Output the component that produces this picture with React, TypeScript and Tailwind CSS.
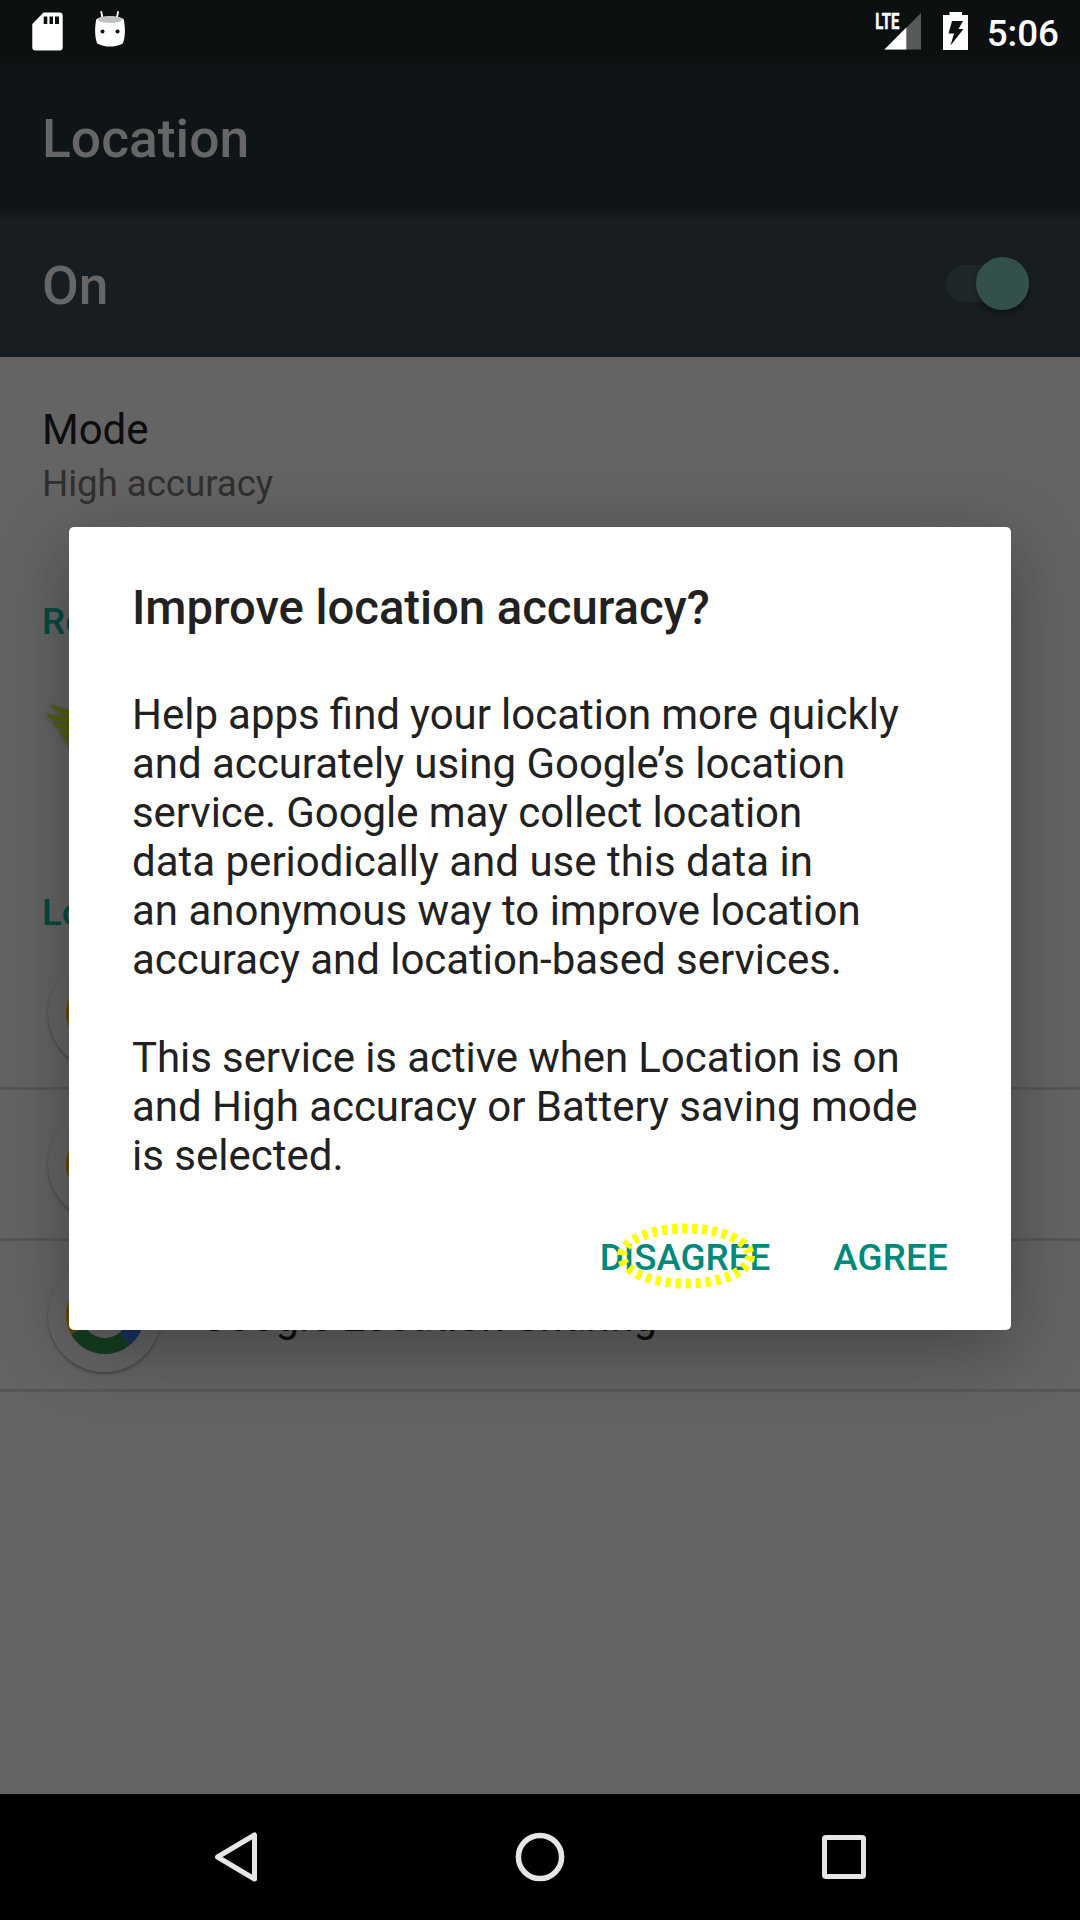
import React from "react";

function StatusBar() {
  return (
    <header className="flex h-[63px] shrink-0 items-start justify-between bg-[#0c1011] text-white">
      <div className="flex">
        <svg className="ml-8 mt-3 h-[39px] w-[31px]" viewBox="0 0 31 39">
          <path
            fill="#fff"
            fillRule="evenodd"
            d="M11.5.5H27.5Q30.7.5 30.7 3.7V35.3Q30.7 38.5 27.500 38.500H3.500Q.3 38.500.3 35.300V12ZM11.700 4.500V12H15.300V4.500ZM17.500 4.500V12H21V4.500ZM23 4.500V12H27V4.500Z"
          />
        </svg>
        <svg className="ml-[31px] mt-2.5 h-[38px] w-[32px]" viewBox="0 0 32 38">
          <path d="M7.300 2 8.700 9M24 2 22.700 9" stroke="#fff" strokeWidth="1.800" strokeLinecap="round" />
          <path
            fill="#fff"
            d="M2.200 9.500C6 5 26 5 29.800 9.500C31.400 18 31.400 27 28.800 33.500C22 37.600 10 37.600 3.200 33.500C.6 27 .6 18 2.200 9.500Z"
          />
          <ellipse cx="16" cy="9.700" rx="12" ry="3.400" fill="#bfc1c1" />
          <circle cx="8.500" cy="21.500" r="2" fill="#0c1011" />
          <circle cx="23.500" cy="21.500" r="2" fill="#0c1011" />
        </svg>
      </div>
      <div className="flex">
        <svg className="mt-3 h-[39px] w-[47px] overflow-visible" viewBox="0 0 47 39">
          <path d="M46 1V37.500H9.500Z" fill="#57595a" />
          <path d="M31.300 15.500V37.500H9.500Z" fill="#fff" />
          <text
            x="0.300"
            y="17.300"
            fill="#fff"
            stroke="#fff"
            strokeWidth="0.500"
            className="font-['Roboto'] text-[22px] font-bold"
            textLength="24"
            lengthAdjust="spacingAndGlyphs"
          >
            LTE
          </text>
        </svg>
        <svg className="ml-[21px] mt-3 h-[38px] w-[25px]" viewBox="0 0 25 38">
          <path d="M6.500 0H19V3H25V38H0V3H6.500Z" fill="#fff" />
          <path d="M9 9H20L15.500 17H20.500L7.500 33.500L11 21.500H5.500Z" fill="#0c1011" />
        </svg>
        <span className="ml-[19px] mr-[21px] mt-[12px] text-[36.75px] font-medium leading-[44px]">5:06</span>
      </div>
    </header>
  );
}

function GoogleBadge() {
  return (
    <div className="flex size-[113px] items-center justify-center rounded-full bg-[#656565] shadow-[0_2px_3px_rgba(0,0,0,0.3)]">
      <svg className="size-[78px]" viewBox="-39 -39 78 78" fill="none" strokeWidth="16">
        <path d="M-21.900 -21.900A31 31 0 0 1 21.900 -21.900" stroke="#5e1b15" />
        <path d="M-26.800 15.500A31 31 0 0 1 -21.900 -21.900" stroke="#644a02" />
        <path d="M20 23.700A31 31 0 0 1 -26.800 15.500" stroke="#153f20" />
        <path d="M31 0A31 31 0 0 1 20 23.700" stroke="#1a3161" />
      </svg>
    </div>
  );
}

function ServiceRow({ label }: { label: string }) {
  return (
    <li className="flex h-[151px] items-center gap-[38px] border-b-[3px] border-[#575757] pl-[48px]">
      <GoogleBadge />
      <span className="pt-[3px] text-[42px] leading-[49px] text-[#0d0d0d]">{label}</span>
    </li>
  );
}

function WingIcon() {
  return (
    <svg
      className="ml-[45px] mt-[61px] h-[84px] w-[96px] drop-shadow-[0_1px_2px_rgba(0,0,0,0.3)]"
      viewBox="0 0 96 84"
      fill="#506200"
    >
      <path d="M5 0Q14 4 40 10V19L24 13Q9 7 5 0Z" />
      <path d="M0 9Q12 13 40 15V27L24 20Q6 17 0 9Z" />
      <path d="M7 18Q16 21 40 22V34L24 28Q12 25 7 18Z" />
      <path d="M13 27Q20 29 40 29V40L24 33Q16 32 13 27Z" />
      <path d="M17 34Q22 35 40 34V45L24 38Q19 37 17 34Z" />
      <path d="M21 40Q26 41 40 41V48L24 43Z" />
    </svg>
  );
}

function SettingsPage() {
  return (
    <>
      <div className="flex h-[147px] shrink-0 items-center bg-[#0f1517] pl-[42px] pt-[5px]">
        <h1 className="text-[53.4px] font-medium leading-[62px] text-[#666]">Location</h1>
      </div>
      <div className="flex h-[147px] shrink-0 items-center justify-between bg-[#171d20] bg-linear-to-b from-[#11171a] from-0% to-[#171d20] to-7% pl-[42px] pr-[51px]">
        <span className="pt-1 text-[53.4px] font-medium leading-[62px] text-[#666]">On</span>
        <div className="flex h-[37px] w-[83px] items-center justify-end rounded-full bg-[#1e2829]">
          <div className="size-[53px] shrink-0 rounded-full bg-[#34504c] shadow-[0_4px_5px_rgba(0,0,0,0.3)]" />
        </div>
      </div>
      <main className="flex flex-1 flex-col bg-[#646464]">
        <div className="pl-[42px] pt-12">
          <p className="text-[42px] leading-[49px] text-[#0d0d0d]">Mode</p>
          <p className="mt-2 text-[36.75px] leading-[43px] tracking-[-0.08px] text-[#303030]">High accuracy</p>
        </div>
        <h2 className="mt-[95px] pl-[42px] text-[36.75px] font-medium leading-[43px] text-[#004c43]">
          Recent location requests
        </h2>
        <WingIcon />
        <h2 className="mt-[103px] pl-[42px] text-[36.75px] font-medium leading-[43px] text-[#004c43]">
          Location services
        </h2>
        <ul className="mt-[5px]">
          <ServiceRow label="Emergency Location Service" />
          <ServiceRow label="Google Location History" />
          <ServiceRow label="Google Location Sharing" />
        </ul>
      </main>
    </>
  );
}

function AccuracyDialog() {
  return (
    <div className="absolute inset-x-0 top-[527px] flex justify-center">
      <section className="flex h-[803px] w-[942px] flex-col rounded-[5px] bg-white px-[63px] pt-[53px] text-[#212121] shadow-[0_18px_74px_rgba(0,0,0,0.33)]">
        <h2 className="text-[47.25px] font-medium leading-[56px] tracking-[-0.04px]">Improve location accuracy?</h2>
        <div className="mt-[54px] flex flex-col gap-[49px] whitespace-nowrap text-[42px] leading-[49px]">
          <p>
            <span className="block [word-spacing:-0.35px]">Help apps find your location more quickly</span>
            <span className="block tracking-[-0.035px]">and accurately using Google’s location</span>
            <span className="block tracking-[-0.065px]">service. Google may collect location</span>
            <span className="block">data periodically and use this data in</span>
            <span className="block">an anonymous way to improve location</span>
            <span className="block tracking-[-0.03px]">accuracy and location-based services.</span>
          </p>
          <p>
            <span className="block tracking-[-0.085px]">This service is active when Location is on</span>
            <span className="block tracking-[-0.035px]">and High accuracy or Battery saving mode</span>
            <span className="block">is selected.</span>
          </p>
        </div>
        <div className="mt-[56px] flex justify-end gap-[63px] text-[36.75px] font-medium leading-[43px] text-[#00897b]">
          <button className="relative">
            DISAGREE
            <svg className="absolute left-[16px] top-[-13px] h-[66px] w-[140px]" viewBox="0 0 140 66">
              <ellipse
                cx="70"
                cy="33"
                rx="64"
                ry="27.500"
                fill="none"
                stroke="#ff0"
                strokeWidth="10"
                strokeDasharray="5 5"
              />
            </svg>
          </button>
          <button className="tracking-[0.2px]">AGREE</button>
        </div>
      </section>
    </div>
  );
}

function NavigationBar() {
  return (
    <nav className="flex h-[126px] shrink-0 items-center justify-between bg-black pl-[214px] pr-[214px]">
      <svg className="h-[50px] w-11" viewBox="0 0 44 50" fill="none" stroke="#e6e6e6" strokeWidth="5" strokeLinejoin="round">
        <path d="M40.500 3V47L3.500 25Z" />
      </svg>
      <svg className="size-[50px]" viewBox="0 0 50 50" fill="none" stroke="#e6e6e6" strokeWidth="5.500">
        <circle cx="25" cy="25" r="21.600" />
      </svg>
      <svg className="size-11" viewBox="0 0 44 44" fill="none" stroke="#e6e6e6" strokeWidth="5">
        <rect x="2.500" y="2.500" width="39" height="39" rx="1.500" />
      </svg>
    </nav>
  );
}

export default function App() {
  return (
    <div className="relative flex h-[1920px] w-[1080px] flex-col overflow-hidden font-['Roboto',sans-serif]">
      <StatusBar />
      <SettingsPage />
      <NavigationBar />
      <AccuracyDialog />
    </div>
  );
}
